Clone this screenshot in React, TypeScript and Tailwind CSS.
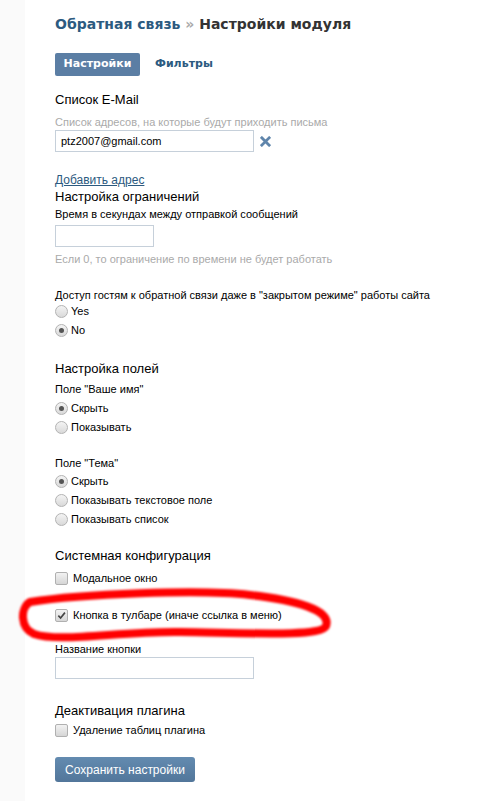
import { FC } from "react";

const Radio: FC<{ checked?: boolean; label: string }> = ({ checked, label }) => (
  <div className="flex h-[19px] items-center">
    <span className="mr-[3px] flex h-[13px] w-[13px] items-center justify-center rounded-full border border-[#b3b3b3] bg-gradient-to-b from-[#f4f4f4] to-[#d9d9d9]">
      {checked && <span className="h-[5px] w-[5px] rounded-full bg-[#555]" />}
    </span>
    <span>{label}</span>
  </div>
);

const Checkbox: FC<{ checked?: boolean; label: string }> = ({ checked, label }) => (
  <div className="flex h-[19px] items-center">
    <span className="mr-[5px] flex h-[13px] w-[13px] items-center justify-center rounded-[2px] border border-[#b0b0b0] bg-gradient-to-b from-[#f2f2f2] to-[#d6d6d6]">
      {checked && (
        <svg viewBox="0 0 10 10" className="h-[9px] w-[9px]">
          <path d="M1.5 5.2 L4 7.8 L8.8 1.8" fill="none" stroke="#444" strokeWidth="1.8" />
        </svg>
      )}
    </span>
    <span>{label}</span>
  </div>
);

const App: FC = () => {
  return (
    <div className="relative flex min-h-[801px] w-[479px] bg-white font-['Liberation_Sans',sans-serif] text-[11px] text-black">
      <div className="w-[25px] shrink-0 bg-[#fafafa]" />
      <div className="flex flex-col pl-[30px] pt-[14px]">
        <h1 className="font-['DejaVu_Sans',sans-serif] text-[14px] font-bold leading-[20px] text-[#333]">
          <span className="text-[#2c5a80]">Обратная связь</span>
          <span className="text-[#aaa]"> » </span>
          Настройки модуля
        </h1>

        <div className="mt-[19px] flex items-center font-['DejaVu_Sans',sans-serif] text-[11px] font-bold">
          <span className="flex h-[23px] w-[85px] items-center justify-center rounded-[2px] bg-[#5b7ea4] text-white">Настройки</span>
          <span className="ml-[15px] text-[#2c5a80]">Фильтры</span>
        </div>

        <div className="mt-[16px] text-[13px] leading-[16px]">Список E-Mail</div>
        <div className="mt-[7px] leading-[14px] text-[#aaa]">Список адресов, на которые будут приходить письма</div>
        <div className="mt-[1px] flex items-center">
          <div className="flex h-[22px] w-[199px] items-center border border-[#c6d0da] px-[5px] text-[11px]">ptz2007@gmail.com</div>
          <svg viewBox="0 0 12 12" className="ml-[6px] h-[11px] w-[11px]">
            <path d="M2 2 L10 10 M10 2 L2 10" stroke="#5f85ab" strokeWidth="3" strokeLinecap="square" />
          </svg>
        </div>
        <a className="mt-[21px] text-[12px] leading-[14px] text-[#2c5a80] underline">Добавить адрес</a>

        <div className="mt-[2px] text-[13px] leading-[16px]">Настройка ограничений</div>
        <div className="mt-[2px] leading-[14px]">Время в секундах между отправкой сообщений</div>
        <div className="mt-[4px] h-[22px] w-[99px] border border-[#c6d0da]" />
        <div className="mt-[5px] leading-[14px] text-[#aaa]">Если 0, то ограничение по времени не будет работать</div>

        <div className="mt-[22px] leading-[14px]">Доступ гостям к обратной связи даже в "закрытом режиме" работы сайта</div>
        <Radio label="Yes" />
        <Radio checked label="No" />

        <div className="mt-[21px] text-[13px] leading-[16px]">Настройка полей</div>
        <div className="mt-[5px] leading-[14px]">Поле "Ваше имя"</div>
        <div className="mt-[3px]">
          <Radio checked label="Скрыть" />
          <Radio label="Показывать" />
        </div>

        <div className="mt-[19px] leading-[14px]">Поле "Тема"</div>
        <div className="mt-[2px]">
          <Radio checked label="Скрыть" />
          <Radio label="Показывать текстовое поле" />
          <Radio label="Показывать список" />
        </div>

        <div className="mt-[19px] text-[13px] leading-[16px]">Системная конфигурация</div>
        <div className="mt-[5px]">
          <Checkbox label="Модальное окно" />
        </div>
        <div className="mt-[18px]">
          <Checkbox checked label="Кнопка в тулбаре (иначе ссылка в меню)" />
        </div>
        <div className="mt-[17px] leading-[14px]">Название кнопки</div>
        <div className="mt-[1px] h-[22px] w-[199px] border border-[#c6d0da]" />

        <div className="mt-[24px] text-[13px] leading-[16px]">Деактивация плагина</div>
        <div className="mt-[2px]">
          <Checkbox label="Удаление таблиц плагина" />
        </div>

        <button className="mt-[17px] h-[25px] w-[140px] rounded-[3px] bg-gradient-to-b from-[#638bb0] to-[#52769a] text-[12px] text-white">
          Сохранить настройки
        </button>
      </div>

      <svg className="pointer-events-none absolute left-0 top-0 h-[801px] w-[479px]" viewBox="0 0 479 801">
        <path
          d="M30 602 C 80 594, 200 589, 250 595 C 295 600, 332 610, 326 626 C 321 637, 250 633, 180 632 C 120 631, 60 643, 34 634 C 20 628, 20 608, 30 602 Z"
          fill="none"
          stroke="#ff0000"
          strokeWidth="8"
          strokeLinejoin="round"
          style={{ filter: "blur(1px)" }}
        />
      </svg>
    </div>
  );
};

export default App;
